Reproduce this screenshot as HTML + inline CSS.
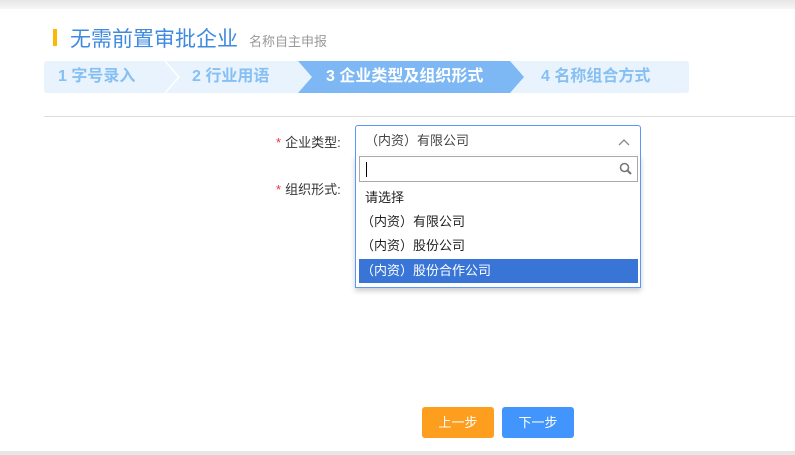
<!DOCTYPE html>
<html><head><meta charset="utf-8"><style>
*{margin:0;padding:0;box-sizing:border-box}
body{width:795px;height:455px;background:#fff;position:relative;overflow:hidden;font-family:"Liberation Sans","Noto Sans CJK SC",sans-serif}
.top{position:absolute;left:0;top:0;width:795px;height:9px;background:linear-gradient(#e6e6e6,#f7f7f7)}
.bot{position:absolute;left:0;top:451px;width:795px;height:4px;background:#e6e6e6}
.bar{position:absolute;left:53px;top:29px;width:4px;height:17px;background:#fcb900}
.t1{position:absolute;left:70px;top:26px;font-size:21px;color:#3d8ae0;line-height:28px}
.t2{position:absolute;left:249px;top:34px;font-size:13px;color:#999;line-height:16px}
.steps{position:absolute;left:44px;top:61px;width:645px;height:32px;background:#e8f3fe;border-radius:3px}
.st{position:absolute;top:0;line-height:32px;font-size:16px;font-weight:bold;color:#86bff2}
.div{position:absolute;left:44px;top:116px;width:751px;height:1px;background:#ddd}
.lbl{position:absolute;font-size:13px;color:#333}
.lbl b{color:#e33;font-weight:normal;margin-right:4px}
.sel{position:absolute;left:355px;top:125px;width:286px;height:31px;border:1px solid #5897fb;border-radius:3px 3px 0 0;background:#fff;font-size:13px;color:#444;line-height:29px;padding-left:9px}
.panel{position:absolute;left:355px;top:155px;width:286px;height:133px;border:1px solid #5897fb;border-top:none;background:#fff;box-shadow:0 3px 5px rgba(0,0,0,.2)}
.srch{position:absolute;left:3px;top:1px;width:279px;height:26px;border:1px solid #aaa}
.cur{position:absolute;left:6px;top:5px;width:1px;height:15px;background:#000}
.opt{position:absolute;left:3px;width:279px;height:24px;line-height:24px;font-size:13px;color:#222;padding-left:6px}
.btn{position:absolute;top:407px;width:72px;height:31px;border-radius:3px;color:#fff;font-size:13px;text-align:center;line-height:31px}
</style></head><body>
<div class="top"></div>
<div class="bar"></div>
<div class="t1">无需前置审批企业</div>
<div class="t2">名称自主申报</div>
<div class="steps">
<svg width="645" height="32" style="position:absolute;left:0;top:0">
<polyline points="121,0 135,16 121,32" fill="none" stroke="#fff" stroke-width="1.5"/>
<polygon points="254,0 466,0 480,16 466,32 254,32 268,16" fill="#7db7f4"/>
</svg>
<span class="st" style="left:14px">1 字号录入</span>
<span class="st" style="left:148px">2 行业用语</span>
<span class="st" style="left:282px;color:#fff">3 企业类型及组织形式</span>
<span class="st" style="left:497px">4 名称组合方式</span>
</div>
<div class="div"></div>
<div class="lbl" style="left:276px;top:132px"><b>*</b>企业类型:</div>
<div class="lbl" style="left:276px;top:179px"><b>*</b>组织形式:</div>
<div class="sel">（内资）有限公司
<svg width="12" height="8" style="position:absolute;right:10px;top:12px"><polyline points="1,7 6,2 11,7" fill="none" stroke="#888" stroke-width="1.3"/></svg>
</div>
<div class="panel">
<div class="srch"><div class="cur"></div>
<svg width="14" height="14" style="position:absolute;right:4px;top:5px"><circle cx="5.5" cy="5.5" r="4" fill="none" stroke="#777" stroke-width="1.6"/><line x1="8.5" y1="8.5" x2="12" y2="12" stroke="#777" stroke-width="2"/></svg>
</div>
<div class="opt" style="top:31px;padding-left:6px">请选择</div>
<div class="opt" style="top:55px;padding-left:2px">（内资）有限公司</div>
<div class="opt" style="top:79px;padding-left:2px">（内资）股份公司</div>
<div class="opt" style="top:104px;padding-left:2px;background:#3875d7;color:#fff">（内资）股份合作公司</div>
</div>
<div class="btn" style="left:422px;background:#fe9e1e">上一步</div>
<div class="btn" style="left:502px;background:#4295fc">下一步</div>
<div class="bot"></div>
</body></html>
